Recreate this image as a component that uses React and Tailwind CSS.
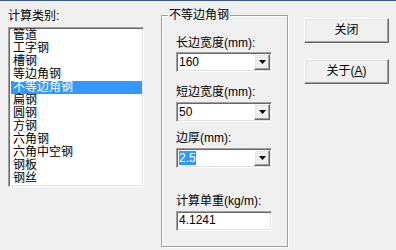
import { useState } from "react";

const items = [
  "管道",
  "工字钢",
  "槽钢",
  "等边角钢",
  "不等边角钢",
  "扁钢",
  "圆钢",
  "方钢",
  "六角钢",
  "六角中空钢",
  "钢板",
  "钢丝",
];

const sunken =
  "border border-t-[#a0a0a0] border-l-[#a0a0a0] border-r-white border-b-white shadow-[inset_1px_1px_0_#696969,inset_-1px_-1px_0_#e3e3e3]";
const raised =
  "border border-t-white border-l-white border-r-[#696969] border-b-[#696969] shadow-[inset_-1px_-1px_0_#a0a0a0,inset_1px_1px_0_#e3e3e3]";

export default function App() {
  const [selected, setSelected] = useState(4);

  return (
    <div
      className="w-[396px] h-[250px] bg-[#f0f0f0] border-t border-[#3c5a8c] overflow-hidden text-[12px] leading-[13px] text-black"
      style={{ fontFamily: '"Liberation Sans", "Noto Sans CJK SC", sans-serif' }}
    >
      <div className="flex">
        {/* ===== LEFT: CATEGORY LIST ===== */}
        <div className="ml-[8px] mt-[9px] w-[136px]">
          <div className="h-[13px]">计算类别:</div>
          <div className={`mt-[4px] h-[160px] bg-white p-[1px] ${sunken}`}>
            <div className="pl-[1px] pt-[0px]">
              {items.map((name, i) => (
                <div
                  key={name}
                  onClick={() => setSelected(i)}
                  className={`h-[13px] pl-[2px] whitespace-nowrap ${
                    selected === i ? "bg-[#3399ff] text-white" : ""
                  }`}
                >
                  {name}
                </div>
              ))}
            </div>
          </div>
        </div>

        {/* ===== GROUP BOX ===== */}
        <div className="ml-[17px] mt-[14px] relative w-[127px] h-[232px] border border-[#a0a0a0] shadow-[inset_1px_1px_0_#fff,1px_1px_0_#fff]">
          <div className="absolute left-[6px] top-[-7px] bg-[#f0f0f0] px-[1px]">
            不等边角钢
          </div>
          <div className="pl-[14px] pt-[21px] flex flex-col">
            <div className="h-[13px]">长边宽度(mm):</div>
            <Combo value="160" className="mt-[2px]" />
            <div className="h-[13px] mt-[14px]">短边宽度(mm):</div>
            <Combo value="50" className="mt-[3px]" />
            <div className="h-[13px] mt-[10px]">边厚(mm):</div>
            <Combo value="2.5" className="mt-[3px]" focused />
            <div className="h-[13px] mt-[27px]">计算单重(kg/m):</div>
            <div className={`mt-[3px] w-[96px] h-[20px] bg-white pl-[2px] pt-[2px] ${sunken}`}>
              4.1241
            </div>
          </div>
        </div>

        {/* ===== BUTTONS ===== */}
        <div className="ml-[16px] mt-[17px] flex flex-col gap-[16px]">
          <button className={`w-[85px] h-[25px] bg-[#f0f0f0] ${raised}`}>关闭</button>
          <button className={`w-[85px] h-[25px] bg-[#f0f0f0] ${raised}`}>
            关于(<span className="underline">A</span>)
          </button>
        </div>
      </div>
    </div>
  );
}

function Combo({ value, className = "", focused = false }) {
  return (
    <div className={`w-[96px] h-[20px] bg-white flex items-center ${sunken} ${className}`}>
      <div className="flex-1 pl-[2px]">
        <span className={focused ? "bg-[#3399ff] text-white" : ""}>{value}</span>
      </div>
      <div className={`w-[16px] h-[16px] mr-[1px] bg-[#f0f0f0] flex items-center justify-center ${raised}`}>
        <svg width="7" height="4" viewBox="0 0 7 4">
          <path d="M0 0h7L3.5 4z" fill="#000" />
        </svg>
      </div>
    </div>
  );
}
